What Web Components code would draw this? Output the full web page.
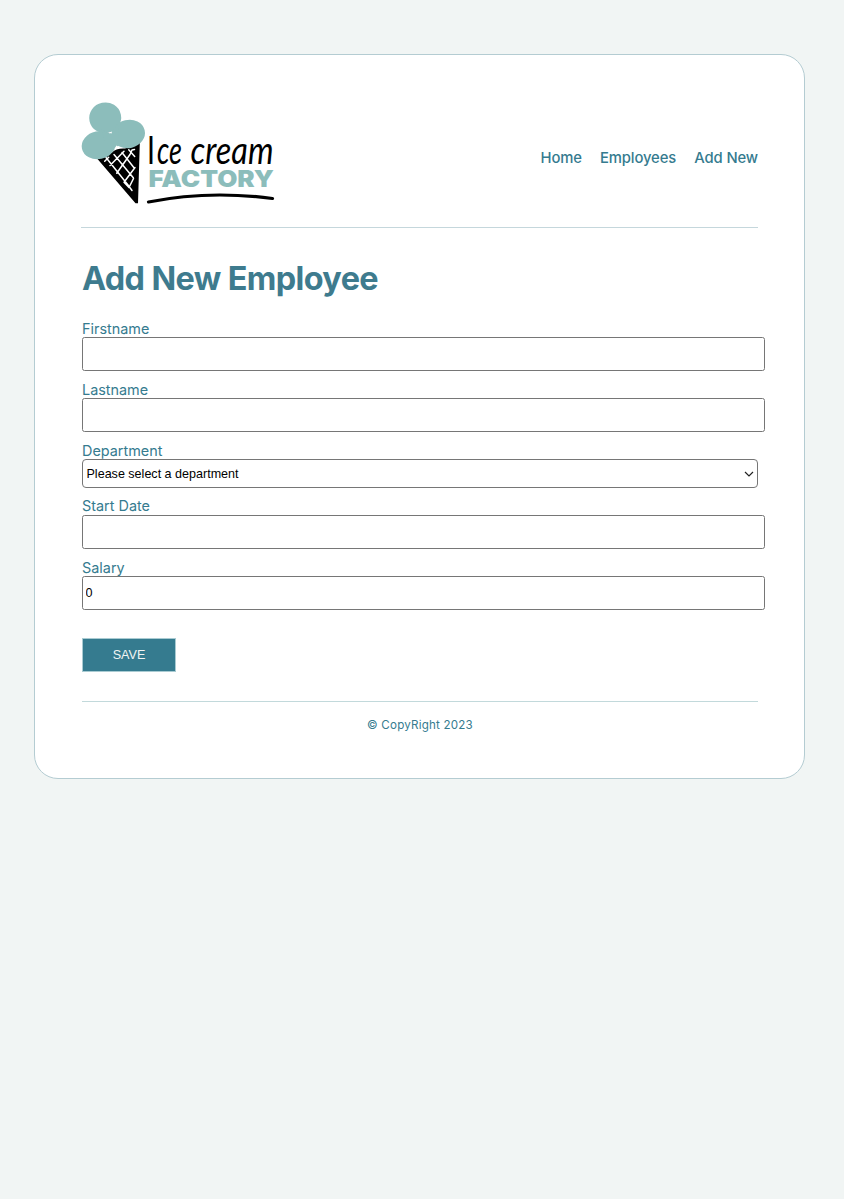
<!DOCTYPE html>
<html lang="en">
<head>
<meta charset="utf-8">
<title>Ice Cream Factory</title>
<style>
html,body{margin:0;background:#f1f5f4}
body{font-family:Inter,"Liberation Sans",sans-serif;color:#357b8f}
</style>
</head>
<body>
<app-page></app-page>
<script>
const define = (name, html) => customElements.define(name, class extends HTMLElement {
  constructor() {
    super();
    this.attachShadow({mode: 'open'}).innerHTML = typeof html === 'function' ? html(this) : html;
  }
});

define('factory-logo', `
<style>:host{display:block;width:194px;height:104px}svg{display:block;overflow:visible}</style>
<svg width="194" height="104" viewBox="81 101.500 194 104" role="img" aria-label="Ice cream factory">
  <path d="M97.500 158.500L112 152Q116 147.500 125 148L139.800 142.500L138 202.700H135.500Z" fill="#000"/>
  <path d="M122 152L134 167.300M114 154L133.300 177.300M106 157L128 184.500L132 190M128.700 149.300L134.700 156M110 165L124 150.700M116.700 172.700L130 154L132 149.500L134.500 149M124 181.700L135 167M129 187L133.500 178M104.700 160.700L108.700 156.700M124 181.700L129 187" stroke="#fff" stroke-width="1.500" fill="none" stroke-linejoin="round" stroke-linecap="round"/>
  <g fill="#8cbdbb">
    <ellipse cx="105.200" cy="117.300" rx="16" ry="15.300" transform="rotate(-12 105.200 117.300)"/>
    <ellipse cx="128.500" cy="133.500" rx="16.600" ry="14.100" transform="rotate(-14 128.500 133.500)"/>
    <ellipse cx="98.600" cy="144.700" rx="17" ry="13.900" transform="rotate(-12 98.600 144.700)"/>
    <path d="M101 129L110 133L118 124L119 145L113 150L105 140Z"/>
  </g>
  <path d="M109 132L112 131.500L111.500 133ZM114.500 148L116.500 145L120 147.500L115 149Z" fill="#fff"/>
  <g fill="#000" font-family="Lato,sans-serif" font-size="39" font-style="italic">
    <text x="147" y="163" font-style="normal" textLength="8" lengthAdjust="spacingAndGlyphs">I</text>
    <text x="157" y="163" textLength="25" lengthAdjust="spacingAndGlyphs">ce</text>
    <text x="190.500" y="163" textLength="83" lengthAdjust="spacingAndGlyphs">cream</text>
  </g>
  <text x="148.500" y="186.800" font-family="Inter,sans-serif" font-size="23" font-weight="900" fill="#8cbdbb" textLength="125.500" lengthAdjust="spacingAndGlyphs">FACTORY</text>
  <path d="M148.500 201.500Q208 189.500 272.500 198" fill="none" stroke="#000" stroke-width="3.200" stroke-linecap="round"/>
</svg>`);

define('nav-link', `
<style>:host{display:block}a{color:inherit;text-decoration:none;font-size:14.800px;letter-spacing:-.1px;font-weight:500;line-height:20px;white-space:nowrap}</style>
<a href="#"><slot></slot></a>`);

define('site-header', `
<style>
:host{display:flex;justify-content:space-between;align-items:flex-start;height:126px;margin-left:-1px;box-sizing:border-box;border-bottom:1px solid #c5d7dc}
nav{display:flex;gap:18px;margin-top:45.500px}
</style>
<factory-logo></factory-logo>
<nav><nav-link>Home</nav-link><nav-link>Employees</nav-link><nav-link>Add New</nav-link></nav>`);

define('form-field', el => `
<style>
:host{display:block;height:61.150px}
label{display:block;font-size:14.400px;line-height:17px;height:var(--label-height,17px)}
input{display:block;box-sizing:border-box;width:683px;height:34px;border:1px solid #767676;border-radius:2.500px;padding:0 2.500px;background:#fff;color:#000;font:12.600px "Liberation Sans",sans-serif;outline:0}
</style>
<label for="f">${el.getAttribute('label')}</label><input id="f" value="${el.getAttribute('value') || ''}">`);

define('select-field', el => `
<style>
:host{display:block;height:55.500px}
label{display:block;font-size:14.400px;line-height:17px;height:17px}
.select{display:flex;align-items:center;justify-content:space-between;box-sizing:border-box;height:29px;border:1px solid #767676;border-radius:4px;padding:1px 3px 0 3.500px;background:#fff;color:#000;font:12.550px "Liberation Sans",sans-serif}
</style>
<label>${el.getAttribute('label')}</label>
<div class="select" role="combobox" tabindex="0"><span><slot></slot></span>
<svg width="10" height="8" viewBox="0 0 10 8"><path d="M1 2L5 6L9 2" fill="none" stroke="#222" stroke-width="1.200"/></svg></div>`);

define('save-button', `
<style>
:host{display:block}
button{display:block;width:94px;height:34px;border:1px solid #a9cbd2;padding:0;background:#357b8f;color:#f1f5f4;font:12.600px "Liberation Sans",sans-serif}
</style>
<button><slot></slot></button>`);

define('site-footer', `
<style>:host{display:block;box-sizing:border-box;border-top:1px solid #c2d9db;padding-top:15px;text-align:center;font-size:11.600px;line-height:17px;letter-spacing:.2px}</style>
<slot></slot>`);

define('app-page', `
<style>
:host{display:block;padding:54px 39px 0 34px;min-height:1199px;box-sizing:border-box}
main{box-sizing:border-box;height:725px;border:1px solid #b4ccd2;border-radius:24px;background:#fff;padding:46.500px 46px 0 47px}
h1{margin:31px 0 0;font-size:32.400px;line-height:40px;font-weight:700;letter-spacing:-.62px;color:#3e7b8e}
form{margin-top:21px}
.date{--label-height:17.700px;height:61.650px}
save-button{margin-top:17.500px}
site-footer{margin-top:29px}
</style>
<main>
  <site-header></site-header>
  <h1>Add New Employee</h1>
  <form>
    <form-field label="Firstname"></form-field>
    <form-field label="Lastname"></form-field>
    <select-field label="Department">Please select a department</select-field>
    <form-field class="date" label="Start Date"></form-field>
    <form-field label="Salary" value="0"></form-field>
    <save-button>SAVE</save-button>
  </form>
  <site-footer>© CopyRight 2023</site-footer>
</main>`);
</script>
</body>
</html>
